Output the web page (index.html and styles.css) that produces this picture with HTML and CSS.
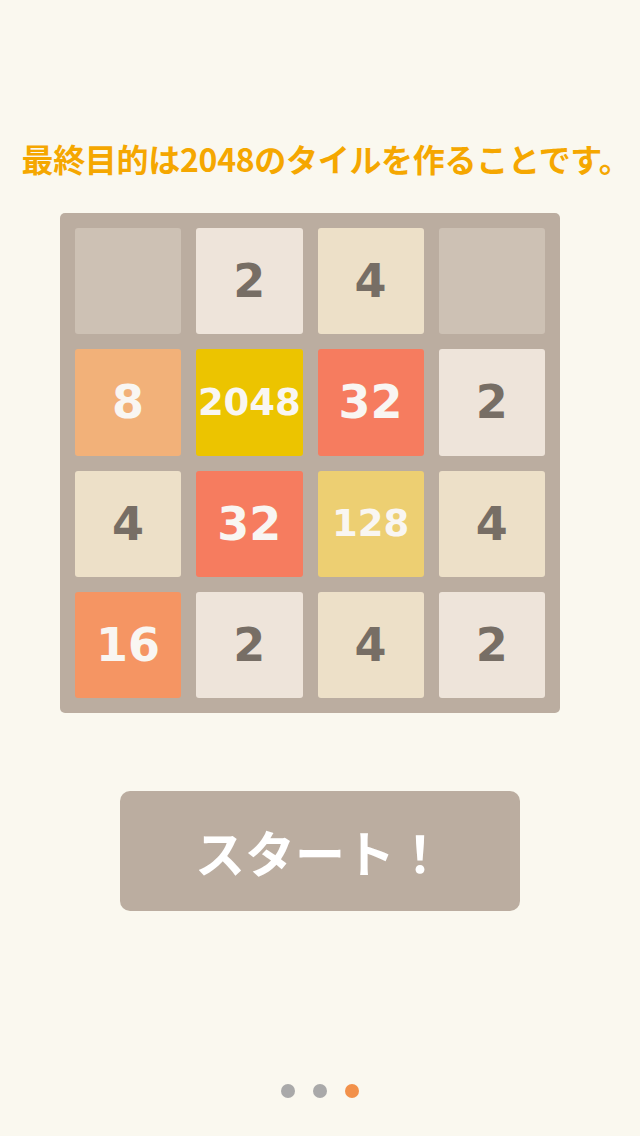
FILE: index.html
```html
<!DOCTYPE html>
<html>
<head lang="ja">
    <meta charset="UTF-8">
    <title>2048</title>
    <link rel="stylesheet" href="styles.css">
</head>
<body>
<div id="page">
    <h1 class="goal">最終目的は2048のタイルを作ることです。</h1>
    <div id="board">
        <div class="tile empty"></div>
        <div class="tile t2">2</div>
        <div class="tile t4">4</div>
        <div class="tile empty"></div>

        <div class="tile t8">8</div>
        <div class="tile t2048">2048</div>
        <div class="tile t32">32</div>
        <div class="tile t2">2</div>

        <div class="tile t4">4</div>
        <div class="tile t32">32</div>
        <div class="tile t128">128</div>
        <div class="tile t4">4</div>

        <div class="tile t16">16</div>
        <div class="tile t2">2</div>
        <div class="tile t4">4</div>
        <div class="tile t2">2</div>
    </div>
    <div class="start">スタート！</div>
    <div class="dots">
        <i></i><i></i><i class="current"></i>
    </div>
</div>
</body>
</html>
```
FILE: styles.css
```css
*{
    margin: 0;
    padding: 0;
}
body{
    background-color: #faf8ef;
    font-family: "Open Sans", "Noto Sans CJK JP", sans-serif;
}
#page{
    width: 640px;
    height: 1136px;
    display: flex;
    flex-direction: column;
    align-items: center;
}
.goal{
    margin-top: 138px;
    padding-left: 12px;
    height: 40px;
    font: bold 32px/40px "Noto Sans CJK JP", sans-serif;
    letter-spacing: -0.3px;
    color: #f5a700;
    text-align: center;
    white-space: nowrap;
}
#board{
    margin-top: 35px;
    align-self: flex-start;
    margin-left: 60px;
    width: 500px;
    height: 500px;
    box-sizing: border-box;
    padding: 15px;
    background-color: #bbada0;
    border-radius: 5px;
    display: grid;
    grid-template-columns: repeat(4, 1fr);
    grid-template-rows: repeat(4, 1fr);
    gap: 15px;
}
.tile{
    border-radius: 3px;
    display: flex;
    align-items: center;
    justify-content: center;
    font: bold 46px/1 "DejaVu Sans", sans-serif;
    color: #776e65;
}
.empty{ background-color: #cdc1b4; }
.t2{ background-color: #eee4da; }
.t4{ background-color: #ede0c8; }
.t8{ background-color: #f2b179; color: #f9f6f2; }
.t16{ background-color: #f59563; color: #f9f6f2; }
.t32{ background-color: #f67c5f; color: #f9f6f2; }
.t128{ background-color: #edcf72; color: #f9f6f2; font-size: 37px; }
.t2048{ background-color: #ecc400; color: #f9f6f2; font-size: 37px; }
.start{
    margin-top: 78px;
    width: 400px;
    height: 120px;
    border-radius: 10px;
    background-color: #bbada0;
    color: #fff;
    font: bold 50px/120px "Noto Sans CJK JP", sans-serif;
    text-align: center;
}
.dots{
    margin-top: 173px;
    display: flex;
    gap: 18px;
}
.dots i{
    width: 14px;
    height: 14px;
    border-radius: 50%;
    background-color: #a9a9a9;
}
.dots .current{
    background-color: #f2914a;
}
```
